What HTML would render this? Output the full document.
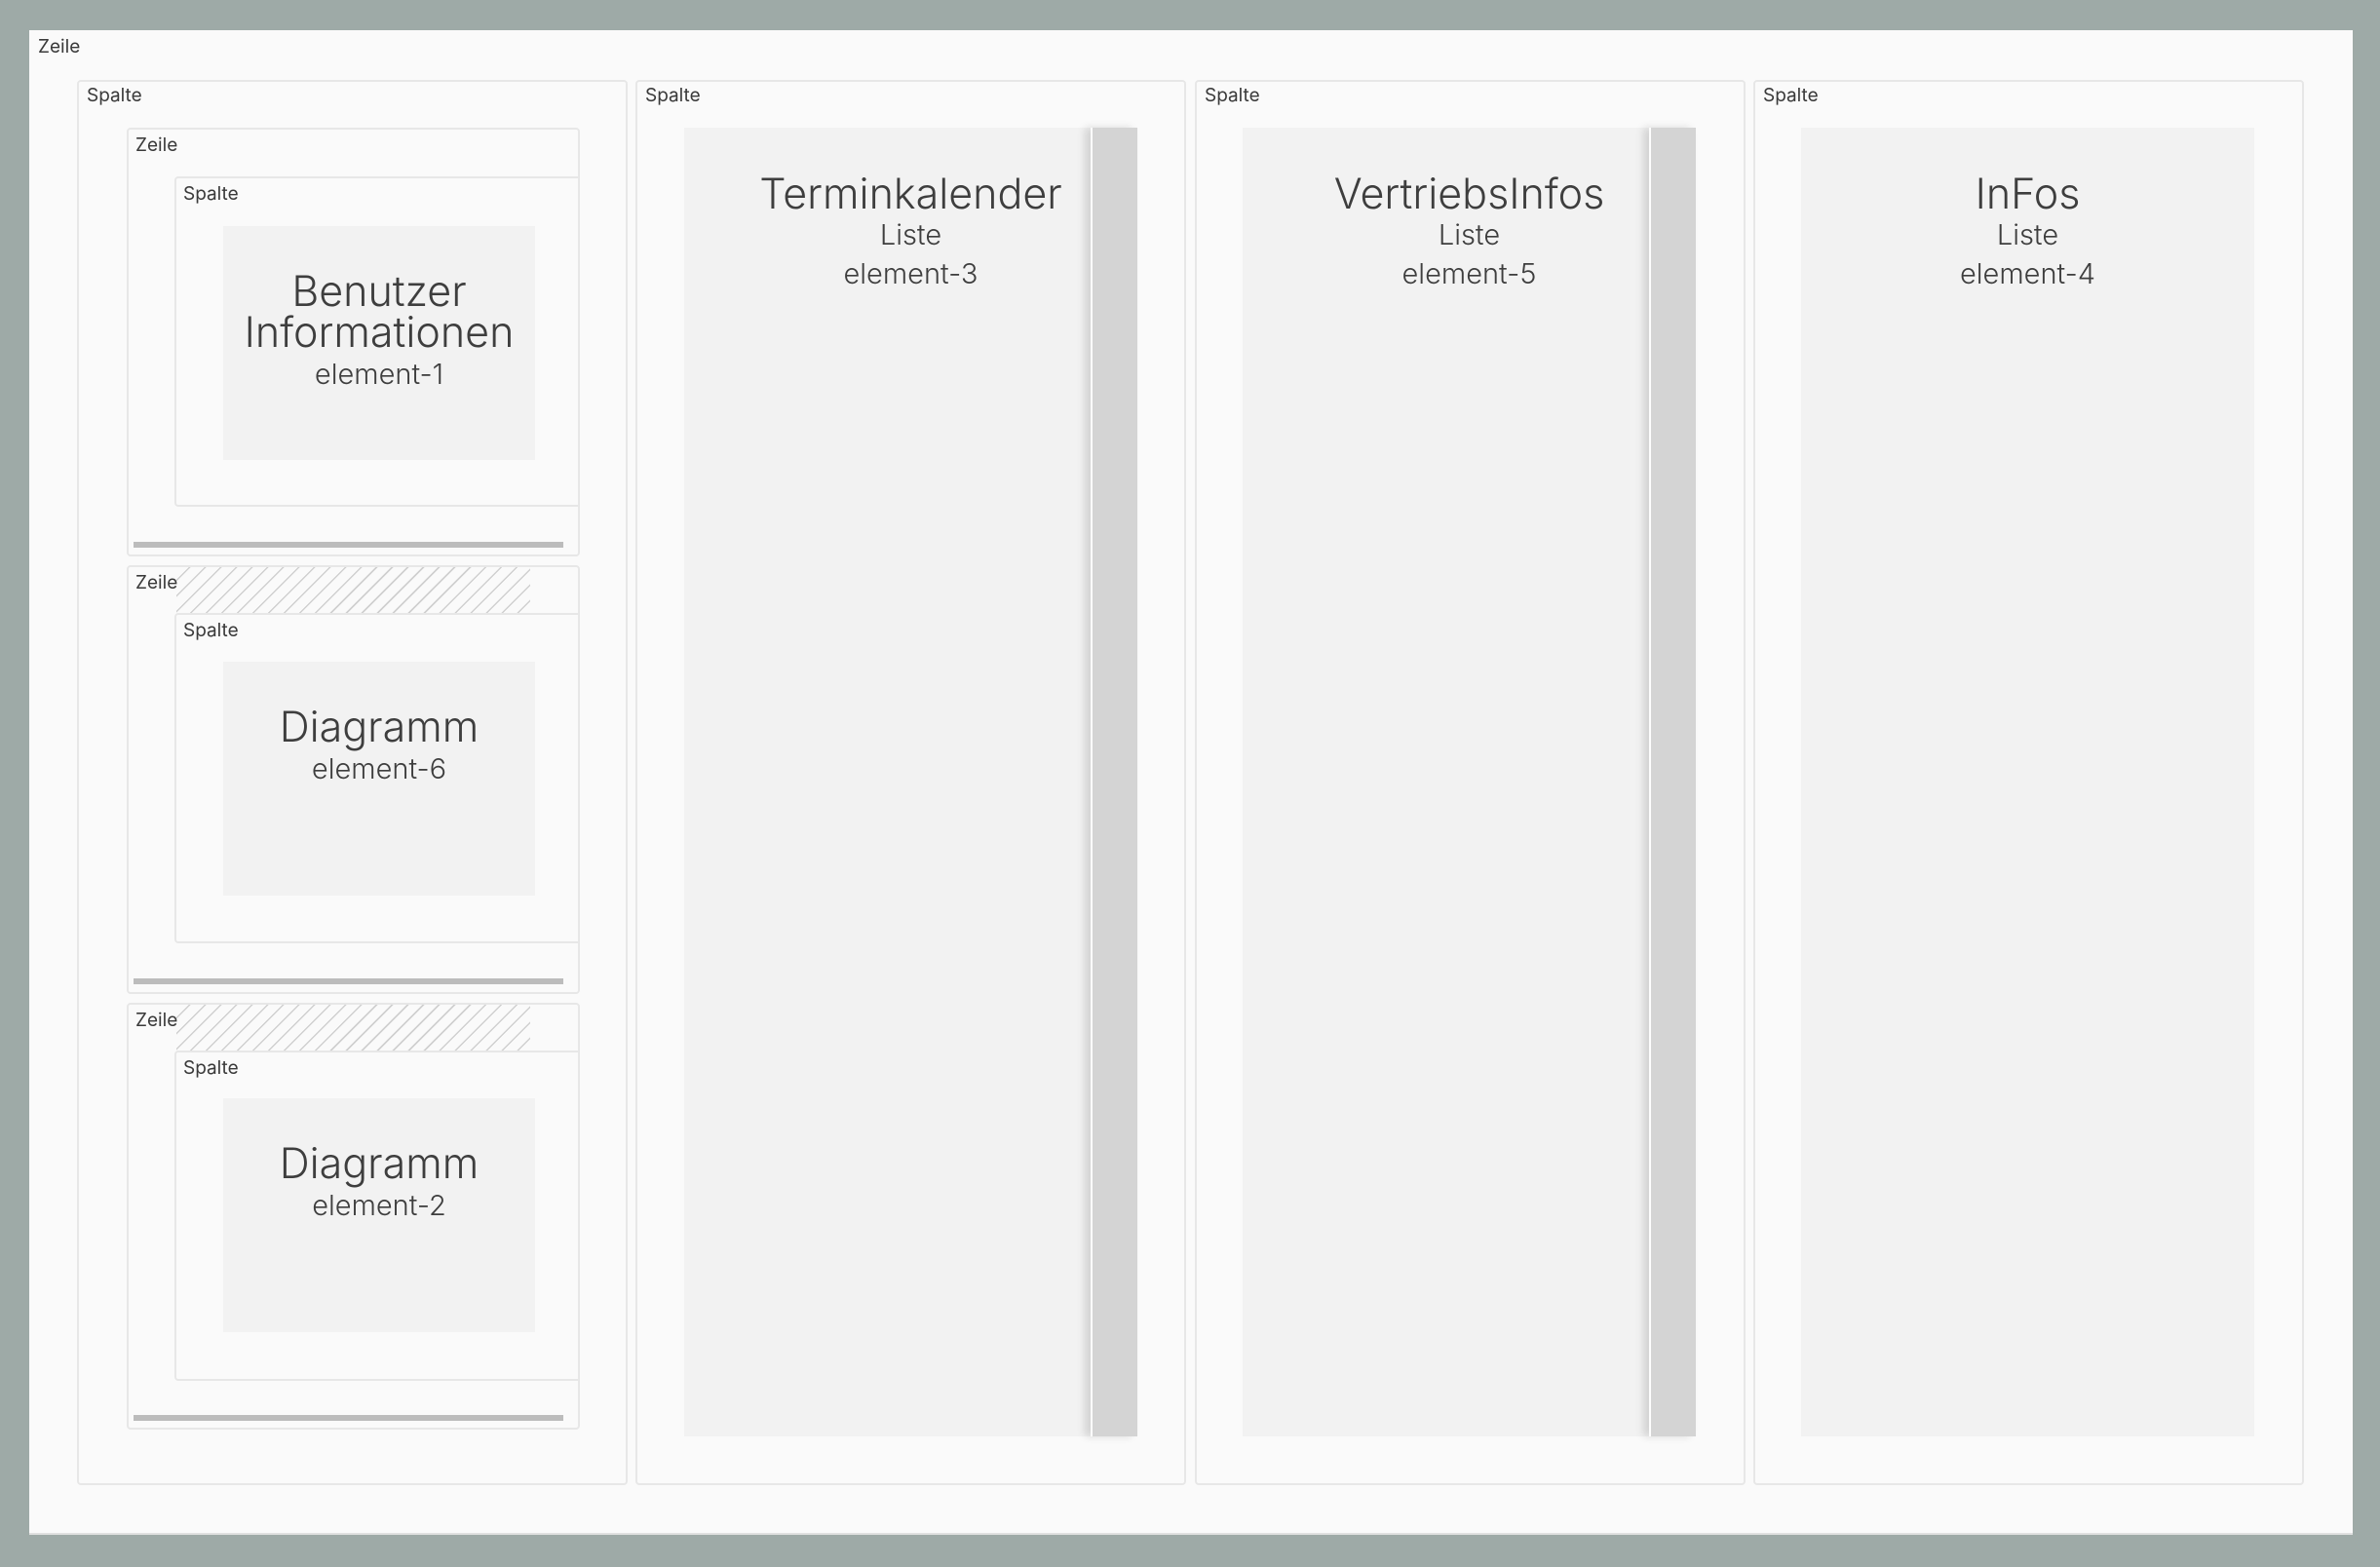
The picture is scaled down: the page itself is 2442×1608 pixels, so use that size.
<!DOCTYPE html>
<html><head><meta charset="utf-8"><style>
*{margin:0;padding:0;box-sizing:border-box}
body{width:2442px;height:1608px;background:#9eaaa7;position:relative;overflow:hidden;font-family:"Inter","Liberation Sans",sans-serif;color:#3c3c3c}
.a{position:absolute}
.panel{background:#fafafa}
.bx{position:absolute;border:2px solid #e7e7e7;border-radius:4px;background:#fafafa}
.lbl{position:absolute;font-size:19px;line-height:19px;color:#3a3a3a;white-space:nowrap}
.gray{position:absolute;background:#f2f2f2}
.t{position:absolute;left:0;right:0;text-align:center;white-space:nowrap;color:#3e3e3e;font-weight:300}
.big{font-size:43px;line-height:43px}
.mid{font-size:29px;line-height:29px}
.bar{position:absolute;background:#bcbcbc;height:6px}
.hatch{position:absolute;background:repeating-linear-gradient(135deg,transparent 0 9px,#d0d0d0 9px 10.5px,transparent 10.5px 11.3px)}
.sb{position:absolute;background:#d4d4d4;border-left:2px solid #fdfdfd;box-shadow:-6px 0 8px rgba(0,0,0,.13)}
</style></head><body>
<div class="a panel" style="left:30px;top:31px;width:2384px;height:1544px;border-bottom:2px solid #e0e0e0"></div>
<div class="lbl" style="left:39px;top:38px">Zeile</div>

<!-- column 1 -->
<div class="bx" style="left:79px;top:82px;width:565px;height:1442px"></div>
<div class="lbl" style="left:89px;top:88px">Spalte</div>

<!-- row 1 -->
<div class="bx" style="left:130px;top:131px;width:465px;height:440px"></div>
<div class="lbl" style="left:139px;top:139px">Zeile</div>
<div class="bx" style="left:179px;top:181px;width:414px;height:339px;border-right:none;border-radius:4px 0 0 4px"></div>
<div class="lbl" style="left:188px;top:189px">Spalte</div>
<div class="gray" style="left:229px;top:232px;width:320px;height:240px">
 <div class="t big" style="top:46px">Benutzer</div>
 <div class="t big" style="top:88px">Informationen</div>
 <div class="t mid" style="top:137px">element-1</div>
</div>
<div class="bar" style="left:137px;top:556px;width:441px"></div>

<!-- row 2 -->
<div class="bx" style="left:130px;top:580px;width:465px;height:440px"></div>
<div class="hatch" style="left:181px;top:582px;width:363px;height:47px"></div>
<div class="lbl" style="left:139px;top:588px">Zeile</div>
<div class="bx" style="left:179px;top:629px;width:414px;height:339px;border-right:none;border-radius:4px 0 0 4px"></div>
<div class="lbl" style="left:188px;top:637px">Spalte</div>
<div class="gray" style="left:229px;top:679px;width:320px;height:240px">
 <div class="t big" style="top:46px">Diagramm</div>
 <div class="t mid" style="top:95px">element-6</div>
</div>
<div class="bar" style="left:137px;top:1004px;width:441px"></div>

<!-- row 3 -->
<div class="bx" style="left:130px;top:1029px;width:465px;height:438px"></div>
<div class="hatch" style="left:181px;top:1031px;width:363px;height:47px"></div>
<div class="lbl" style="left:139px;top:1037px">Zeile</div>
<div class="bx" style="left:179px;top:1078px;width:414px;height:339px;border-right:none;border-radius:4px 0 0 4px"></div>
<div class="lbl" style="left:188px;top:1086px">Spalte</div>
<div class="gray" style="left:229px;top:1127px;width:320px;height:240px">
 <div class="t big" style="top:46px">Diagramm</div>
 <div class="t mid" style="top:95px">element-2</div>
</div>
<div class="bar" style="left:137px;top:1452px;width:441px"></div>

<!-- column 2 -->
<div class="bx" style="left:652px;top:82px;width:565px;height:1442px"></div>
<div class="lbl" style="left:662px;top:88px">Spalte</div>
<div class="gray" style="left:702px;top:131px;width:465px;height:1343px"></div>
<div class="sb" style="left:1119px;top:131px;width:48px;height:1343px"></div>
<div class="a" style="left:702px;top:131px;width:465px;height:300px">
 <div class="t big" style="top:47px">Terminkalender</div>
 <div class="t mid" style="top:95px">Liste</div>
 <div class="t mid" style="top:135px">element-3</div>
</div>

<!-- column 3 -->
<div class="bx" style="left:1226px;top:82px;width:565px;height:1442px"></div>
<div class="lbl" style="left:1236px;top:88px">Spalte</div>
<div class="gray" style="left:1275px;top:131px;width:465px;height:1343px"></div>
<div class="sb" style="left:1692px;top:131px;width:48px;height:1343px"></div>
<div class="a" style="left:1275px;top:131px;width:465px;height:300px">
 <div class="t big" style="top:47px">VertriebsInfos</div>
 <div class="t mid" style="top:95px">Liste</div>
 <div class="t mid" style="top:135px">element-5</div>
</div>

<!-- column 4 -->
<div class="bx" style="left:1799px;top:82px;width:565px;height:1442px"></div>
<div class="lbl" style="left:1809px;top:88px">Spalte</div>
<div class="gray" style="left:1848px;top:131px;width:465px;height:1343px">
 <div class="t big" style="top:47px">InFos</div>
 <div class="t mid" style="top:95px">Liste</div>
 <div class="t mid" style="top:135px">element-4</div>
</div>
</body></html>
